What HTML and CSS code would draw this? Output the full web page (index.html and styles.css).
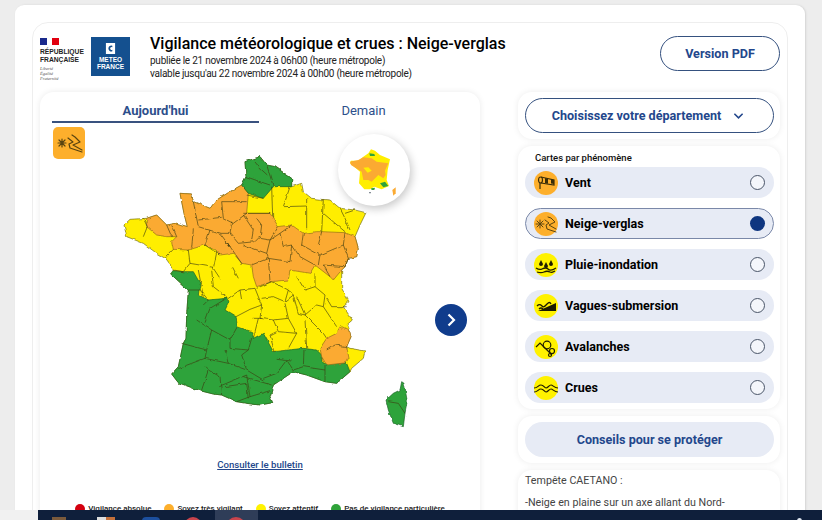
FILE: index.html
```html
<!DOCTYPE html>
<html lang="fr">
<head>
<meta charset="utf-8">
<title>Vigilance météorologique et crues</title>
<link rel="stylesheet" href="styles.css">
</head>
<body>
<div class="outer">
<div class="inner">
  <header class="head">
    <div class="rf">
      <svg class="rf-flag" viewBox="0 0 19 7" width="19" height="7"><rect width="7" height="7" fill="#1a2a8c"/><rect x="7" width="5" height="7" fill="#fff"/><rect x="12" width="7" height="7" fill="#e1000f"/></svg>
      <div class="rf-name">RÉPUBLIQUE<br>FRANÇAISE</div>
      <div class="rf-motto">Liberté<br>Égalité<br>Fraternité</div>
    </div>
    <div class="mf">
      <svg viewBox="0 0 12 12" width="11" height="11"><path d="M1 0h10v12H1z" fill="#fff"/><path d="M8 3a3.2 3.2 0 1 0 0 6V7.400a1.600 1.600 0 1 1 0-2.800z" fill="#14508f"/></svg>
      <div class="mf-name">METEO<br>FRANCE</div>
    </div>
    <div class="titles">
      <h1>Vigilance météorologique et crues : Neige-verglas</h1>
      <p>publiée le 21 novembre 2024 à 06h00 (heure métropole)</p>
      <p>valable jusqu'au 22 novembre 2024 à 00h00 (heure métropole)</p>
    </div>
    <a class="pdf">Version PDF</a>
  </header>
  <div class="cols">
    <section class="mapcard">
      <div class="tabs">
        <div class="tab on">Aujourd'hui</div>
        <div class="tab">Demain</div>
      </div>
      <div class="stage">
        <div class="badge">
          <svg viewBox="0 0 32 32" width="32" height="32"><g stroke="#5a4410" stroke-width="1.200" fill="none" stroke-linecap="round" stroke-linejoin="round"><path d="M9 12v8M5 16h8M6 13l6 6M12 13l-6 6"/><path d="M19 8l3 2 5 5-7 3 9 5M15 11l5 4-4 2 1 4 12 4"/></g></svg>
        </div>
        <svg class="france" viewBox="0 0 960 930" width="320" height="310">
          <defs>
            <filter id="rough" x="-5%" y="-5%" width="110%" height="110%">
              <feTurbulence type="fractalNoise" baseFrequency="0.05" numOctaves="2" seed="4" result="n"/>
              <feDisplacementMap in="SourceGraphic" in2="n" scale="9" xChannelSelector="R" yChannelSelector="G" result="d"/>
              <feGaussianBlur in="d" stdDeviation="0.8"/>
            </filter>
          </defs>
          <g filter="url(#rough)">
          <polygon class="y" points="405,95 450,80 470,105 495,110 545,145 545,170 575,160 580,185 605,205 635,208 660,210 690,235 735,240 768,248 750,285 735,320 745,355 740,380 715,385 705,410 695,420 695,475 717,515 700,530 727,570 710,585 723,620 710,650 720,655 765,663 760,685 725,715 720,725 680,760 645,755 590,735 550,725 520,745 490,765 480,800 488,818 450,825 410,820 380,815 335,795 310,792 270,782 205,758 185,732 205,710 220,640 228,625 230,555 235,480 182,432 190,420 165,385 140,370 100,340 50,320 42,285 60,268 110,265 140,255 170,285 200,280 232,290 222,250 210,190 245,192 250,215 300,235 320,210 360,185 395,165 408,140"/>
          <polygon class="o" points="210,190 245,192 250,215 300,235 320,210 360,185 395,165 415,190 410,250 480,250 505,290 545,285 580,310 620,305 635,305 705,308 735,320 745,355 740,380 715,385 705,410 695,420 670,450 660,440 615,405 600,430 540,420 535,450 485,455 440,470 430,440 425,405 395,400 370,370 330,375 318,360 285,345 235,360 190,358 185,335 200,320 170,320 140,315 110,290 110,265 140,255 170,285 200,280 232,290 222,250"/>
          <polygon class="g" points="405,95 450,80 470,105 495,110 545,145 545,170 490,170 460,205 415,190 395,165 408,140"/>
          <g transform="translate(120 420)">
            <polygon class="g" points="62,12 70,2 100,5 130,5 150,40 145,75 175,90 230,85 235,100 225,120 258,140 262,170 305,185 310,205 340,190 370,245 415,240 460,235 500,240 515,255 520,280 590,280 600,305 560,340 525,335 470,315 430,305 400,325 370,345 360,380 368,398 330,405 290,400 260,395 215,375 190,372 150,362 85,338 65,312 85,290 100,220 108,205 110,135 115,60"/>
            <polygon class="o" points="570,170 600,185 603,200 590,230 597,265 590,278 530,285 515,260 510,235 530,205 560,190"/>
            <polygon class="g" points="755,335 762,340 765,355 772,395 765,430 760,470 730,460 715,420 708,390 730,370 750,360"/>
          </g>
          <path class="l" d="M408,140 L450,155 L480,165 M470,105 L478,130 L490,170 M432,92 L450,115 L472,135 M410,215 L370,215 L335,215 L340,265 L370,280 L410,250 M250,215 L265,290 M265,270 L335,262 M265,290 L330,310 L365,310 M365,275 L360,310 L385,340 L435,335 L450,320 M400,255 L430,300 L425,330 M400,250 L480,250 M440,265 L455,285 L450,325 L480,330 L505,290 M170,285 L185,320 M185,285 L200,320 M250,295 L245,355 M300,300 L285,345 L330,375 M330,310 L360,350 L350,335 L395,400 M400,345 L470,370 L480,330 M470,370 L475,385 L425,405 M480,330 L510,310 L545,285 M510,310 L520,350 L545,345 L570,380 L615,405 M475,385 L540,395 L545,345 M475,385 L480,455 M580,310 L575,345 L630,375 L625,405 M635,305 L625,345 M705,308 L700,345 L630,375 M700,345 L715,385 L705,410 L640,405 L660,440 M100,265 L112,290 L100,320 M190,358 L165,385 M235,360 L240,400 L220,425 L190,420 M240,400 L310,412 M320,368 L310,415 L330,445 M485,170 L488,262 M540,170 L520,230 L590,228 M590,205 L590,298 M640,208 L635,305 M640,250 L705,305 M690,235 L705,265 L720,300 M705,250 L735,240 M410,195 L460,205 M368,412 L385,445"/>
          <g transform="translate(120 420)">
            <path class="l" d="M145,0 L160,80 M185,0 L190,50 L235,85 M235,85 L270,60 L315,55 L335,105 L300,118 L258,140 M270,60 L275,90 M320,55 L365,35 L415,60 L405,95 L370,80 L335,85 M335,105 L330,145 L370,150 L415,145 L405,100 M415,60 L430,75 L405,95 M430,75 L445,130 L465,135 L440,80 M415,145 L440,190 L415,235 M370,150 L385,185 L440,190 M305,145 L335,145 M310,205 L325,145 M360,195 L380,185 M360,195 L375,245 M465,150 L470,235 M500,105 L465,135 L520,190 L530,205 M520,110 L560,170 M530,85 L545,110 L590,110 M495,50 L525,75 L520,110 L500,105 M465,60 L495,50 M440,20 L465,60 M495,10 L495,50 M115,60 L150,60 L175,90 M160,105 L175,90 M230,85 L180,115 L165,155 M185,180 L240,210 L262,170 M140,150 L185,180 L180,200 L170,240 M95,220 L170,240 M170,240 L165,265 L85,295 M240,210 L240,235 L295,240 M225,240 L235,280 L165,265 M305,205 L295,240 L275,255 L290,300 M235,280 L290,300 L340,330 M340,325 L380,310 L410,270 L430,300 M380,265 L425,270 M462,240 L460,290 L430,300 M525,285 L525,335 M460,290 L525,300 M175,300 L155,360 M165,290 L175,300 L210,320 L215,375 M205,350 L290,315 M290,315 L300,380 M280,320 L365,345 M225,350 L290,340 L295,385 M260,395 L300,380 L360,362 M530,240 L555,225 L590,230 M715,395 L745,400 L765,430"/>
          </g>
          </g>
        </svg>
        <div class="mini">
          <svg viewBox="9 12 216 216" width="72" height="72">
            <polygon fill="#ffee00" points="108,58 120,62 135,75 165,88 158,120 155,150 162,168 140,178 118,170 105,178 88,178 72,160 75,125 45,100 48,92 70,92 85,80 100,70"/>
            <polygon fill="#fbaa32" points="45,95 70,90 85,82 110,85 125,95 160,100 150,122 152,135 145,145 130,135 125,140 110,155 100,150 85,150 80,125 48,105"/>
            <polygon fill="#ffee00" points="85,113 100,112 110,122 98,128"/>
            <polygon fill="#2fa33a" points="103,70 118,72 120,78 105,78"/>
            <polygon fill="#2fa33a" points="135,160 150,155 160,168 145,172"/>
            <polygon fill="#2fa33a" points="108,175 120,173 118,180 110,180"/>
            <polygon fill="#fbaa32" points="172,180 182,172 182,190 175,197"/>
            <circle cx="105" cy="188" r="2" fill="#123"/>
          </svg>
        </div>
        <button class="next" aria-label="Suivant"><svg viewBox="0 0 16 16" width="16" height="16"><path d="M5.500 2.500 11 8l-5.500 5.500" fill="none" stroke="#fff" stroke-width="2.200"/></svg></button>
      </div>
      <a class="bulletin">Consulter le bulletin</a>
      <ul class="legend">
        <li><i class="dot red"></i>Vigilance absolue</li>
        <li><i class="dot orange"></i>Soyez très vigilant</li>
        <li><i class="dot yellow"></i>Soyez attentif</li>
        <li><i class="dot green"></i>Pas de vigilance particulière</li>
      </ul>
    </section>
    <aside class="side">
      <div class="panel">
        <button class="outline">Choisissez votre département
          <svg viewBox="0 0 12 8" width="11" height="8"><path d="M1.500 1.500 6 6l4.500-4.500" fill="none" stroke="#23478c" stroke-width="1.700"/></svg>
        </button>
      </div>
      <div class="panel phen">
        <div class="phen-title">Cartes par phénomène</div>
        <div class="row">
          <span class="ico orange"><svg viewBox="0 0 24 24" width="24" height="24"><g fill="none" stroke="#3a2d08" stroke-width="1.200"><ellipse cx="6.500" cy="9" rx="2" ry="3"/><path d="M7 6 20 9v5L7 12M6 12v6"/></g><path d="M11 7l3 .7v5l-3-.6zM17 8.500l3 .6v4l-3-.5z" fill="#3a2d08"/></svg></span>
          <span class="label">Vent</span><span class="radio"></span>
        </div>
        <div class="row sel">
          <span class="ico orange"><svg viewBox="0 0 24 24" width="24" height="24"><g stroke="#5a4410" stroke-width="1" fill="none" stroke-linecap="round" stroke-linejoin="round"><path d="M6 8v8M2 12h8M3 9l6 6M9 9l-6 6"/><path d="M14 5l3 1 4 4-6 3 7 4M11 8l4 3-3 2 1 4 9 3"/></g></svg></span>
          <span class="label">Neige-verglas</span><span class="radio on"></span>
        </div>
        <div class="row">
          <span class="ico yellow"><svg viewBox="0 0 24 24" width="24" height="24"><g fill="#1f1d00"><path d="M7 7l2 4a2 2 0 1 1-4 0zM12 9l2 4a2 2 0 1 1-4 0zM17 7l2 4a2 2 0 1 1-4 0z"/></g><path d="M2 15c3 2 4 2 6 1s4-2 6 0 5 1 8-1M3 19c3 1 5 1 7 0s4-1 6 0 3 0 5-1" fill="none" stroke="#1f1d00" stroke-width="1.300"/></svg></span>
          <span class="label">Pluie-inondation</span><span class="radio"></span>
        </div>
        <div class="row">
          <span class="ico yellow"><svg viewBox="0 0 24 24" width="24" height="24"><path d="M4 17l18-8v8z" fill="#1a1900"/><path d="M3 12c2-2 3-2 5 0s3 0 5-2 3-2 4 0M5 15c2-2 3-1 4 0" fill="none" stroke="#1a1900" stroke-width="1.300"/></svg></span>
          <span class="label">Vagues-submersion</span><span class="radio"></span>
        </div>
        <div class="row">
          <span class="ico yellow"><svg viewBox="0 0 24 24" width="24" height="24"><g fill="none" stroke="#1f1d00" stroke-width="1.200"><path d="M2 12l4-4 5 5 7 7"/><circle cx="13" cy="10" r="3.800"/><circle cx="18" cy="16" r="2.500"/><circle cx="16" cy="20" r="1.500"/></g></svg></span>
          <span class="label">Avalanches</span><span class="radio"></span>
        </div>
        <div class="row">
          <span class="ico yellow"><svg viewBox="0 0 24 24" width="24" height="24"><path d="M0 11c4 0 4-3 7-3s3 3 5 3 3-3 5-3 3 3 7 3M0 15c4 0 4-3 7-3s3 3 5 3 3-3 5-3 3 3 7 3" transform="translate(0 1)" fill="none" stroke="#1f1d00" stroke-width="1.200"/></svg></span>
          <span class="label">Crues</span><span class="radio"></span>
        </div>
      </div>
      <div class="panel">
        <button class="filled">Conseils pour se protéger</button>
      </div>
      <div class="panel note">
        <p>Tempête CAETANO :</p>
        <p>-Neige en plaine sur un axe allant du Nord-</p>
      </div>
    </aside>
  </div>
</div>
</div>
<footer class="taskbar">
  <div class="gap"></div>
  <div class="bar">
    <span class="tb tb-a"></span><span class="tb tb-b"></span><span class="tb tb-c"></span><span class="tb tb-d"></span>
    <span class="tb-active"><span class="tb tb-d"></span></span>
    <span class="tb tb-e"></span>
  </div>
</footer>
</body>
</html>
```

FILE: styles.css
```css
* { box-sizing: border-box; }
html, body { margin: 0; height: 520px; overflow: hidden; }
body { background: #ededed; font-family: Roboto, "Liberation Sans", sans-serif; color: #000; }
button { font-family: inherit; cursor: pointer; }
p, h1, ul { margin: 0; padding: 0; }

.outer { margin: 5px 17px 0 15px; height: 515px; overflow: hidden; padding: 17px 17px 0; background: #fff; border-radius: 9px; box-shadow: 1px 0 2px #d4d4d4; }
.inner { height: 540px; padding: 14px 7px 0; background: #fff; border: 1px solid #eeeeee; border-radius: 16px; }

.head { display: flex; align-items: flex-start; height: 55px; }
.rf { width: 51px; padding-top: 1px; }
.rf-flag { display: block; }
.rf-name { margin-top: 3px; font: 700 6.700px/7.800px "Liberation Sans", sans-serif; color: #222; white-space: nowrap; }
.rf-motto { margin-top: 2px; font: italic 4.500px/5.200px "Liberation Serif", serif; color: #555; }
.mf { width: 39px; height: 39px; padding-top: 6px; background: #14508f; display: flex; flex-direction: column; align-items: center; gap: 2px; }
.mf svg { display: block; }
.mf-name { font: 700 6.500px/7.200px "Liberation Sans", sans-serif; color: #fff; text-align: center; }
.titles { margin-left: 20px; flex: 1; }
h1 { font-size: 16px; line-height: 19px; font-weight: 500; color: #000; margin-top: -3px; margin-bottom: 1px; white-space: nowrap; }
.titles p { font-size: 10px; letter-spacing: -.25px; line-height: 13px; color: #222; white-space: nowrap; }
.pdf { width: 120px; height: 35px; margin-top: -1px; border: 1px solid #35517f; border-radius: 18px; display: flex; align-items: center; justify-content: center; font-size: 12.600px; font-weight: 700; color: #23478c; }

.cols { display: flex; justify-content: space-between; }
.mapcard { width: 440px; height: 440px; padding: 0 12px; background: #fff; border-radius: 14px; box-shadow: 0 0 6px #eaeaea; }
.tabs { display: flex; padding-top: 11px; }
.tab { flex: 1; height: 20px; text-align: center; font-size: 13px; line-height: 15px; color: #2d4f8b; }
.tab.on { font-weight: 700; border-bottom: 2px solid #39527f; flex: 0 0 207px; }
.stage { position: relative; height: 324px; padding: 8px 0 0 58px; margin-top: -1px; }
.france { display: block; overflow: visible; }
.y { fill: #ffee00; stroke: #6d6a10; stroke-width: 2; stroke-linejoin: round; }
.o { fill: #fbaa32; stroke: #8f6a1a; stroke-width: 2; stroke-linejoin: round; }
.g { fill: #2fa33a; stroke: #1a5f26; stroke-width: 2; stroke-linejoin: round; }
.l { fill: none; stroke: #3a3a10; stroke-width: 2.200; stroke-linejoin: round; opacity: .85; }
.badge { position: absolute; left: 1px; top: 5px; width: 32px; height: 32px; background: #fdaf2c; border-radius: 5px; }
.badge svg { display: block; }
.mini { position: absolute; left: 286px; top: 12px; width: 72px; height: 72px; border-radius: 50%; background: #fff; box-shadow: 2px 3px 8px #c9c9c9; }
.mini svg { display: block; }
.next { position: absolute; left: 383px; top: 182px; width: 32px; height: 32px; padding: 0; border: 0; border-radius: 50%; background: #103c8c; display: flex; align-items: center; justify-content: center; }
.bulletin { display: block; margin-top: 12px; text-align: center; font-size: 9.600px; line-height: 13px; font-weight: 500; color: #23478c; text-decoration: underline; }
.legend { list-style: none; display: flex; justify-content: center; gap: 13px; margin-top: 32px; font-size: 8px; line-height: 11px; font-weight: 500; color: #222; }
.legend li { display: flex; align-items: center; gap: 3px; white-space: nowrap; }
.dot { width: 10px; height: 10px; border-radius: 50%; display: block; }
.red { background: #d4000f; }
.orange { background: #fdaf2c; }
.yellow { background: #fff200; }
.green { background: #2fa33a; }

.side { width: 262px; display: flex; flex-direction: column; gap: 7px; }
.panel { padding: 6px 6px 6px 7px; background: #fff; border-radius: 14px; box-shadow: 0 0 6px #ececec; }
.outline { width: 249px; height: 35px; padding: 0 3px 0 0; display: flex; align-items: center; justify-content: center; gap: 12px; background: #fff; border: 1px solid #35517f; border-radius: 18px; font-size: 12.600px; font-weight: 700; color: #23478c; }
.filled { display: block; width: 249px; height: 35px; padding: 0; background: #e7ebf5; border: 0; border-radius: 18px; font-size: 12.600px; font-weight: 700; color: #23478c; }
.phen { display: flex; flex-direction: column; gap: 10px; padding-bottom: 6px; }
.phen-title { margin: 0 0 -7px 10px; font-size: 9.500px; line-height: 12px; font-weight: 500; color: #111; }
.row { height: 31px; padding: 0 9px; display: flex; align-items: center; background: #e7ebf5; border-radius: 16px; }
.row.sel { border: 1px solid #7a88a8; padding: 0 8px; }
.ico { width: 24px; height: 24px; border-radius: 50%; flex: none; }
.ico svg { display: block; }
.label { flex: 1; margin-left: 7px; font-size: 12.500px; font-weight: 700; color: #000; }
.radio { width: 15px; height: 15px; border: 1px solid #4a5568; border-radius: 50%; background: #f4f6fb; }
.radio.on { border: 0; background: #0f3680; }
.note { padding: 4px 7px 0; height: 60px; font-size: 10.700px; line-height: 14px; color: #444; }
.note p { margin-bottom: 8px; white-space: nowrap; }

.taskbar { position: fixed; left: 0; right: 0; bottom: 0; height: 10px; display: flex; overflow: hidden; }
.gap { width: 38px; background: #f1f1f1; }
.bar { position: relative; flex: 1; background: #0f1f3b; display: flex; align-items: flex-start; }
.tb { display: block; flex: none; }
.tb-a { width: 14px; height: 10px; margin: 7px 0 0 14px; background: #7a5a3c; }
.tb-b { width: 18px; height: 10px; margin: 7px 0 0 31px; background: linear-gradient(90deg, #ddd 50%, #c4703a 50%); }
.tb-c { width: 18px; height: 10px; margin: 7px 0 0 27px; background: #1c4f9e; border-radius: 4px 4px 0 0; }
.tb-d { width: 18px; height: 18px; margin: 7px 0 0 24px; border-radius: 50%; background: #c9444c; }
.tb-active { display: block; width: 43px; height: 10px; margin-left: 13px; background: #2f3d58; }
.tb-active .tb-d { width: 20px; height: 20px; margin: 7px 0 0 11px; }
.tb-e { position: absolute; right: 20px; top: 8px; width: 5px; height: 6px; border-radius: 50% 50% 0 0; background: #dfe6f0; }
```
